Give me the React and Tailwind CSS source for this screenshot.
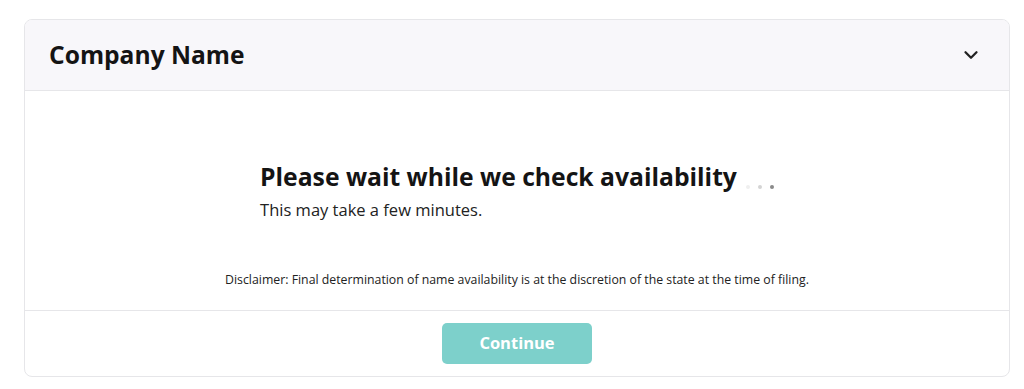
import { ChevronDown } from 'lucide-react'

export default function App() {
  return (
    <div className="min-h-screen bg-white pt-[19px] px-[24px] font-['Open_Sans',sans-serif] text-[#141414]">
      <div className="w-[986px] rounded-[8px] border border-[#e6e6e9] overflow-hidden">
        <div className="h-[71px] bg-[#f8f7fa] border-b border-[#e6e6e9] flex items-center justify-between pl-[24px] pr-[27px]">
          <h2 className="text-[24.6px] font-bold leading-none">Company Name</h2>
          <ChevronDown className="w-[22px] h-[22px] text-[#222]" strokeWidth={2.5} />
        </div>
        <div className="pt-[70px] pb-[21px] flex flex-col items-center">
          <div className="flex flex-col">
            <div className="flex items-end">
              <p className="text-[24.7px] font-bold leading-[32px]">Please wait while we check availability</p>
              <div className="flex gap-[8px] ml-[9px] mb-[4px]">
                <span className="w-[4px] h-[4px] rounded-full bg-[#efefef]" />
                <span className="w-[4px] h-[4px] rounded-full bg-[#d4d4d4]" />
                <span className="w-[4px] h-[4px] rounded-full bg-[#8a8a8a]" />
              </div>
            </div>
            <p className="text-[16.5px] leading-[24px] text-[#222] mt-[5px]">This may take a few minutes.</p>
          </div>
          <p className="mt-[49px] text-[12.3px] leading-[18px] text-[#222]">
            Disclaimer: Final determination of name availability is at the discretion of the state at the time of filing.
          </p>
        </div>
        <div className="border-t border-[#e6e6e9] py-[12px] flex justify-center">
          <button className="w-[150px] h-[41px] rounded-[5px] bg-[#7dd0cb] text-white text-[16.5px] font-bold">
            Continue
          </button>
        </div>
      </div>
    </div>
  )
}
